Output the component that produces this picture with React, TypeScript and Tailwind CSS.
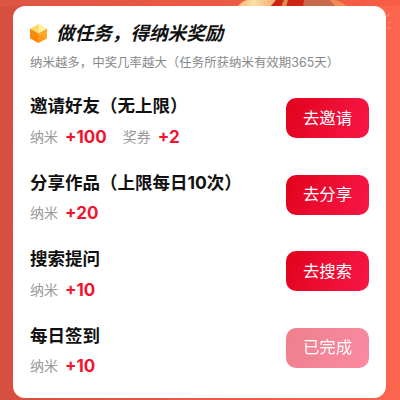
import React from 'react';

interface Reward {
  label: string;
  amount: string;
}

interface Task {
  id: string;
  title: string;
  action: string;
  done?: boolean;
  rewards: Reward[];
}

const TASKS: Task[] = [
  {
    id: 'invite',
    title: '邀请好友（无上限）',
    action: '去邀请',
    rewards: [
      { label: '纳米', amount: '+100' },
      { label: '奖券', amount: '+2' },
    ],
  },
  {
    id: 'share',
    title: '分享作品（上限每日10次）',
    action: '去分享',
    rewards: [{ label: '纳米', amount: '+20' }],
  },
  {
    id: 'search',
    title: '搜索提问',
    action: '去搜索',
    rewards: [{ label: '纳米', amount: '+10' }],
  },
  {
    id: 'checkin',
    title: '每日签到',
    action: '已完成',
    done: true,
    rewards: [{ label: '纳米', amount: '+10' }],
  },
];

const CubeIcon: React.FC = () => (
  <svg viewBox="0 0 17 19" className="w-[17px] h-[19px] shrink-0">
    <path d="M8.5 0 17 4.8v9.4L8.5 19 0 14.2V4.8z" fill="#ffd765" />
    <path d="M8.5 0 17 4.8 8.5 9.5z" fill="#fff0a0" />
    <path d="M17 4.8v9.4L8.5 9.5z" fill="#ffa92e" />
    <path d="M17 14.2 8.5 19V9.5z" fill="#ff9a18" />
    <path d="M0 4.8 8.5 9.5 0 14.2z" fill="#f08c14" />
    <path d="M8.5 9.5V19L0 14.2z" fill="#ff8300" />
  </svg>
);

const Backdrop: React.FC = () => (
  <svg viewBox="0 0 400 400" className="absolute inset-0 w-full h-full">
    <defs>
      <filter id="grain">
        <feTurbulence type="fractalNoise" baseFrequency="0.5" numOctaves="2" />
        <feColorMatrix type="saturate" values="0" />
      </filter>
      <linearGradient id="sleeve" x1="0" y1="0" x2="1" y2="0">
        <stop offset="0" stopColor="#f5b56f" />
        <stop offset="0.4" stopColor="#fbe0a8" />
        <stop offset="1" stopColor="#f2a66a" />
      </linearGradient>
    </defs>
    <rect width="400" height="400" filter="url(#grain)" opacity="0.07" />
    <path d="M237 7Q243 0 248 0H278L271 7z" fill="url(#sleeve)" />
    <path d="M276 0H306L304 7H270z" fill="#cc2514" />
    <path d="M284 0H288L286 7H281z" fill="#e08a50" />
    <path d="M304 0H330L336 7H303z" fill="#c96a4e" />
    <path d="M330 0H334Q342 1 347 7H336z" fill="#f08a58" />
    <path d="M387 17l2-3M388 23l3-1M387 27l3 2" stroke="#ff8768" strokeWidth="1.5" fill="none" />
  </svg>
);

const TaskRow: React.FC<{ task: Task }> = ({ task }) => (
  <li className="flex items-start justify-between h-[76.5px]">
    <div>
      <h3 className="text-[17.5px] leading-[20px] font-bold text-[#111] whitespace-nowrap">{task.title}</h3>
      <div className="flex items-center gap-4 mt-[10.5px]">
        {task.rewards.map((reward) => (
          <div key={reward.label} className="flex items-center gap-[7px] leading-[20px]">
            <span className="text-[14px] text-[#999]">{reward.label}</span>
            <span className="text-[17px] font-bold text-[#f0142f]">{reward.amount}</span>
          </div>
        ))}
      </div>
    </div>
    <button
      className={`w-[83px] h-[40px] mt-[2px] rounded-[10px] bg-linear-110 from-[#e10219] to-[#f81646] text-[16.4px] text-white ${
        task.done ? 'opacity-50' : ''
      }`}
    >
      {task.action}
    </button>
  </li>
);

export default function App() {
  return (
    <div
      className="relative w-[400px] h-[400px] overflow-hidden px-[13px] pt-[6px] bg-linear-to-r from-[#d64b3b] to-[#ff624b] font-['Inter','Noto_Sans_CJK_SC',sans-serif]"
      lang="zh-CN"
    >
      <div className="absolute inset-x-0 top-0 h-[6px] bg-linear-to-r from-[#e0513f] to-[#fb5a40]" />
      <Backdrop />
      <main className="relative w-[373px] h-[391.5px] rounded-[12px] bg-white px-[17px] pt-[16px]">
        <div className="flex items-center gap-[9px] h-[22px]">
          <CubeIcon />
          <h2 className="text-[18.6px] leading-[22px] font-bold italic text-[#111] whitespace-nowrap">
            做任务，得纳米奖励
          </h2>
        </div>
        <p className="mt-[10px] text-[12.4px] leading-[18px] tracking-[0.05px] text-[#888] whitespace-nowrap">
          纳米越多，中奖几率越大（任务所获纳米有效期365天）
        </p>
        <ul className="mt-[24.2px]">
          {TASKS.map((task) => (
            <TaskRow key={task.id} task={task} />
          ))}
        </ul>
      </main>
    </div>
  );
}
